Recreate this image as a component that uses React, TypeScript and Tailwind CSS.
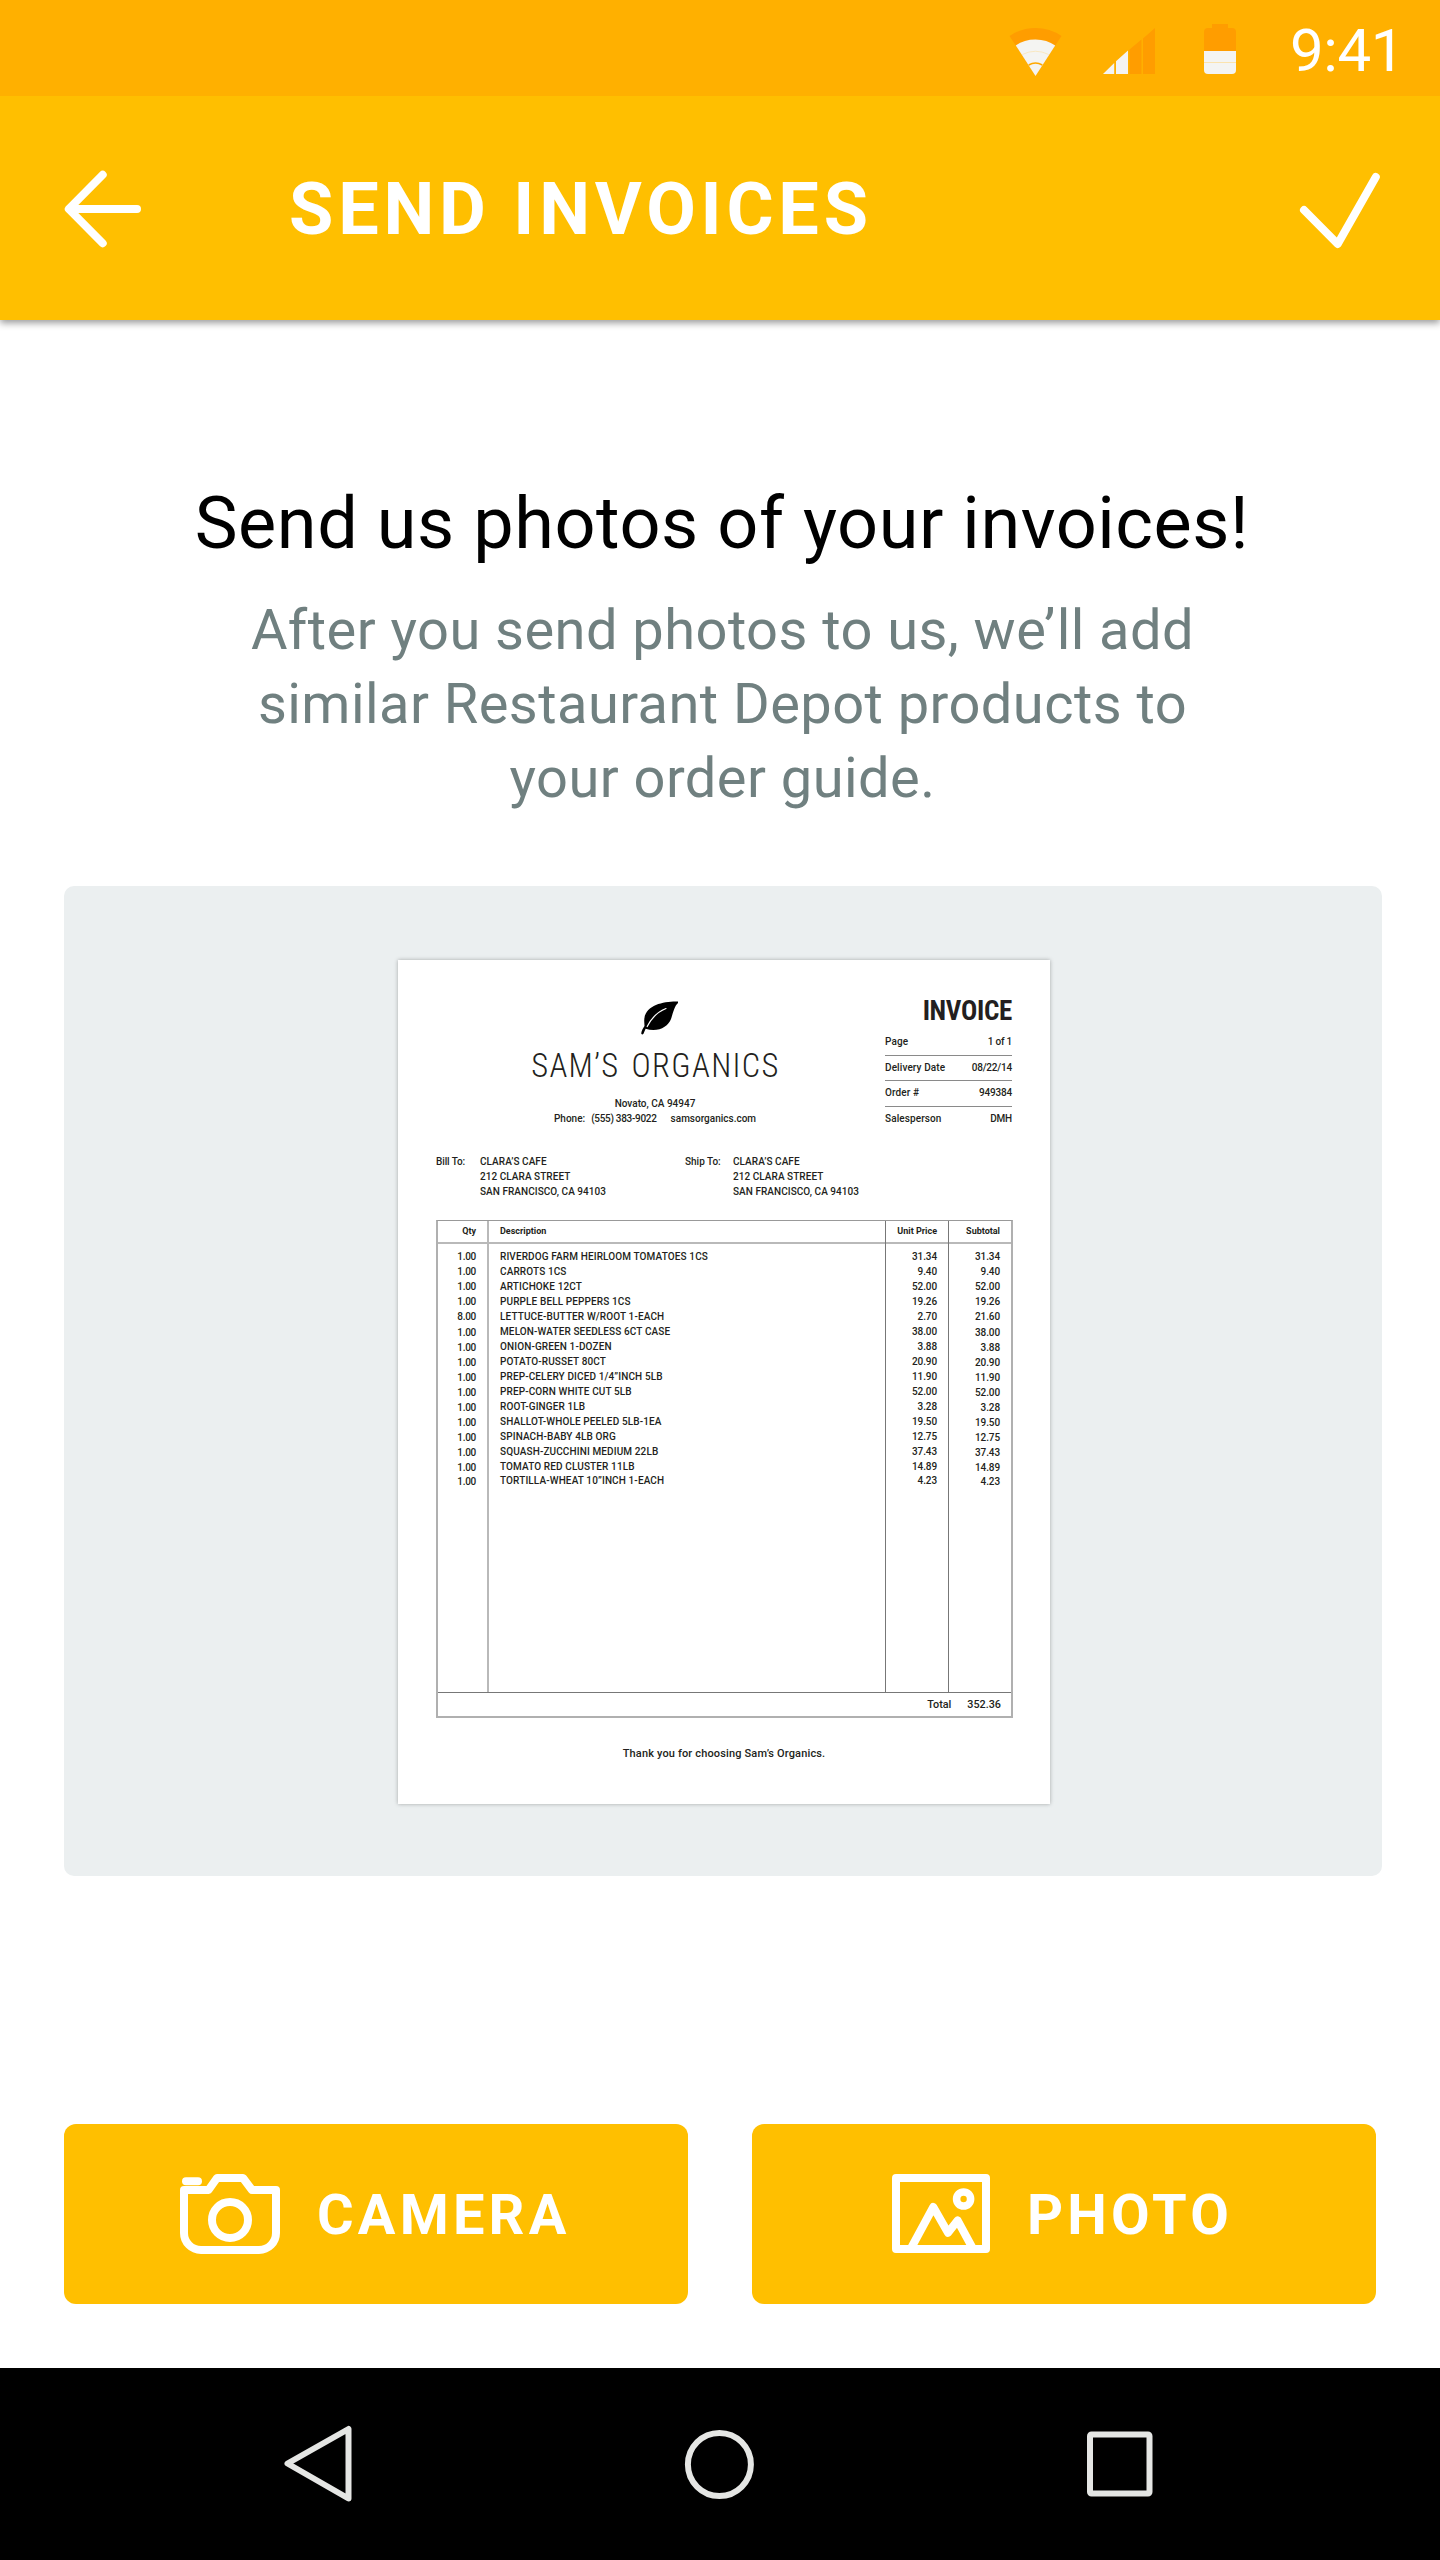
import type { ReactNode } from "react";

type Item = { qty: string; name: string; price: string; subtotal: string };

const items: Item[] = [
  { qty: "1.00", name: "RIVERDOG FARM HEIRLOOM TOMATOES 1CS", price: "31.34", subtotal: "31.34" },
  { qty: "1.00", name: "CARROTS 1CS", price: "9.40", subtotal: "9.40" },
  { qty: "1.00", name: "ARTICHOKE 12CT", price: "52.00", subtotal: "52.00" },
  { qty: "1.00", name: "PURPLE BELL PEPPERS 1CS", price: "19.26", subtotal: "19.26" },
  { qty: "8.00", name: "LETTUCE-BUTTER W/ROOT 1-EACH", price: "2.70", subtotal: "21.60" },
  { qty: "1.00", name: "MELON-WATER SEEDLESS 6CT CASE", price: "38.00", subtotal: "38.00" },
  { qty: "1.00", name: "ONION-GREEN 1-DOZEN", price: "3.88", subtotal: "3.88" },
  { qty: "1.00", name: "POTATO-RUSSET 80CT", price: "20.90", subtotal: "20.90" },
  { qty: "1.00", name: "PREP-CELERY DICED 1/4”INCH 5LB", price: "11.90", subtotal: "11.90" },
  { qty: "1.00", name: "PREP-CORN WHITE CUT 5LB", price: "52.00", subtotal: "52.00" },
  { qty: "1.00", name: "ROOT-GINGER 1LB", price: "3.28", subtotal: "3.28" },
  { qty: "1.00", name: "SHALLOT-WHOLE PEELED 5LB-1EA", price: "19.50", subtotal: "19.50" },
  { qty: "1.00", name: "SPINACH-BABY 4LB ORG", price: "12.75", subtotal: "12.75" },
  { qty: "1.00", name: "SQUASH-ZUCCHINI MEDIUM 22LB", price: "37.43", subtotal: "37.43" },
  { qty: "1.00", name: "TOMATO RED CLUSTER 11LB", price: "14.89", subtotal: "14.89" },
  { qty: "1.00", name: "TORTILLA-WHEAT 10”INCH 1-EACH", price: "4.23", subtotal: "4.23" },
];

const details = [
  ["Page", "1 of 1"],
  ["Delivery Date", "08/22/14"],
  ["Order #", "949384"],
  ["Salesperson", "DMH"],
];

function StatusBar() {
  return (
    <div className="relative z-10 flex h-24 items-start bg-[#ffb000] pl-[1009px]">
      <svg className="h-24 w-[53px] shrink-0" viewBox="0 0 53 96">
        <path d="M26.5 76 L0.5 36 Q12 28 26.5 28 T52.5 36 Z" fill="#ff9d00" />
        <path d="M26.5 76 L6.8 45.5 Q15 39.5 26.5 39.5 T46.2 45.5 Z" fill="#f4f4f2" />
        <path d="M13.3 54.5 Q26.5 48 39.7 54.5" fill="none" stroke="#fbe3ae" strokeWidth="0.7" />
        <path d="M19.7 65 Q26.5 61.2 33.3 65" fill="none" stroke="#ffa800" strokeWidth="1.5" />
      </svg>
      <svg className="ml-[41px] h-24 w-[52px] shrink-0" viewBox="0 0 52 96">
        <path d="M0 74 L11.2 63 V74 Z M13 61.3 L25 50.5 V74 H13 Z" fill="#f4f4f2" />
        <path d="M26.5 49.5 L38.5 39.5 V74 H26.5 Z M40 38.5 L52 28 V74 H40 Z" fill="#ff9d00" />
      </svg>
      <svg className="ml-[49px] h-24 w-8 shrink-0" viewBox="0 0 32 96">
        <path d="M8 24 H24 V28 H28 Q32 28 32 32 V51 H0 V32 Q0 28 4 28 H8 Z" fill="#ff9d00" />
        <path d="M0 51 H32 V70 Q32 74 28 74 H4 Q0 74 0 70 Z" fill="#f4f4f2" />
        <rect y="62" width="32" height="1" fill="#fbe3ae" />
      </svg>
      <div className="ml-[54px] pt-4 text-[60px] leading-[70px] tracking-[-0.4px] text-white">9:41</div>
    </div>
  );
}

function AppBar() {
  return (
    <header className="relative flex h-56 items-start bg-[#ffbf00] pl-16 text-white shadow-[0_3px_7px_rgba(0,0,0,0.4)]">
      <svg className="mt-[73px] h-20 w-20 shrink-0" viewBox="0 0 80 80" fill="none" stroke="currentColor" strokeWidth="8" strokeLinecap="round" strokeLinejoin="round">
        <path d="M38.7 5.8 L4.8 40 L38.7 74.2 M5 40 H73" />
      </svg>
      <h1 className="ml-[145px] mt-[77px] text-[72px] font-bold leading-[73px] tracking-[4.8px]">SEND INVOICES</h1>
      <svg className="ml-auto mr-[58px] mt-[76px] h-20 w-[84px] shrink-0" viewBox="0 0 84 80" fill="none" stroke="currentColor" strokeWidth="8" strokeLinecap="round" strokeLinejoin="round">
        <path d="M6 38 L39.7 72 L77.8 5" />
      </svg>
    </header>
  );
}

function Column({ title, values, className, nudge }: { title: string; values: string[]; className: string; nudge?: boolean }) {
  return (
    <div className={className}>
      <div className="h-[23px] whitespace-nowrap border-b-2 border-[#b9b9b9] px-[11px] text-[9px] font-bold leading-[21px] tracking-normal">{title}</div>
      <div className="px-[11px] pt-[6px]">
        {values.map((v, i) => (
          <div key={i} className={nudge && i === 5 ? "mt-px" : ""}>
            {v}
          </div>
        ))}
      </div>
    </div>
  );
}

function Address() {
  return (
    <div className="tracking-[0.05px]">
      CLARA’S CAFE
      <br />
      212 CLARA STREET
      <br />
      SAN FRANCISCO, CA 94103
    </div>
  );
}

function Invoice() {
  return (
    <article className="h-[844px] w-[652px] bg-white pl-[38px] pt-[35px] text-[10px] font-medium leading-[15px] text-[#231f20] shadow-[0_0_4px_rgba(0,0,0,0.3)]">
      <div className="flex w-[576px]">
        <div className="w-[438px] pt-[5px] text-center">
          <svg className="ml-[204px] h-9 w-10" viewBox="0 0 40 36">
            <path d="M38 1.5 C24 1 4 5 4.2 21 L4.5 26 C3 28 1.5 31 1.2 33.5 C2 35 3.5 34.5 3.8 33 L5.6 28.8 C18 32.5 28 27 31 19 C33.5 11.5 34.5 6 38 3 Z" fill="#000" />
            <path d="M7.2 26.5 C11 19 17 12 26 8.5" fill="none" stroke="#fff" strokeWidth="1.2" strokeLinecap="round" />
          </svg>
          <div className="mt-[11px] pl-[1px] text-[32.5px] font-light leading-[38px] tracking-[1.35px] [font-stretch:75%] [word-spacing:3.5px]">SAM’S ORGANICS</div>
          <div className="mt-[11px]">Novato, CA 94947</div>
          <div className="flex justify-center">
            <span className="mr-[6px]">Phone:</span>
            <span className="mr-[14px] tracking-[-0.3px]">(555) 383-9022</span>
            <span>samsorganics.com</span>
          </div>
        </div>
        <div className="ml-[11px] w-[127px]">
          <div className="text-right text-[27px] font-bold leading-8 tracking-[-0.3px] [font-stretch:75%]">INVOICE</div>
          <div className="mt-[3px]">
            {details.map(([label, value]) => (
              <div key={label} className="flex h-[25.6px] items-center justify-between border-b border-[#8a8a8a] pb-[1.4px] last:border-transparent">
                <span className="tracking-[0.1px]">{label}</span>
                <span className="tracking-[-0.2px]">{value}</span>
              </div>
            ))}
          </div>
        </div>
      </div>

      <div className="mt-[22px] grid grid-cols-[44px_205px_48px_auto]">
        <div className="tracking-[-0.1px]">Bill To:</div>
        <Address />
        <div>Ship To:</div>
        <Address />
      </div>

      <div className="mt-[21px] w-[577px] border-2 border-t border-[#b0b0b0] border-t-[#999]">
        <div className="flex h-[471px] leading-[14.93px]">
          <Column title="Qty" values={items.map((i) => i.qty)} className="w-[51px] border-r-2 border-[#b9b9b9] text-right tracking-[-0.3px]" nudge />
          <Column title="Description" values={items.map((i) => i.name)} className="w-[397px] border-r border-[#777] tracking-[0.12px]" />
          <Column title="Unit Price" values={items.map((i) => i.price)} className="w-[63px] border-r border-[#777] text-right tracking-[-0.1px]" />
          <Column title="Subtotal" values={items.map((i) => i.subtotal)} className="w-[62px] text-right tracking-[-0.1px]" nudge />
        </div>
        <div className="flex h-6 justify-end gap-4 border-t border-[#777] pr-[10px] text-[10.8px] leading-[23px]">
          <span>Total</span>
          <span>352.36</span>
        </div>
      </div>

      <div className="mt-[28px] pr-[38px] text-center text-[11px] tracking-[0.15px]">Thank you for choosing Sam’s Organics.</div>
    </article>
  );
}

function ActionButton({ icon, label, className }: { icon: ReactNode; label: string; className: string }) {
  return (
    <button className={`flex h-[180px] w-[624px] items-center rounded-xl bg-[#ffbf00] text-white ${className}`}>
      {icon}
      <span className="mt-[2px] text-[56px] font-bold leading-[66px] tracking-[4.2px]">{label}</span>
    </button>
  );
}

function CameraIcon() {
  return (
    <svg className="mr-[37px] h-20 w-[100px] shrink-0" viewBox="0 0 100 80" fill="none" stroke="currentColor" strokeWidth="8" strokeLinejoin="round">
      <path d="M4 16 H28.5 L37 4 H63 L72 16 H96 V59 A17 17 0 0 1 79 76 H21 A17 17 0 0 1 4 59 Z" />
      <circle cx="50" cy="46" r="18" />
      <rect x="2" y="3.3" width="20" height="8" rx="4" fill="currentColor" stroke="none" />
    </svg>
  );
}

function PhotoIcon() {
  return (
    <svg className="mr-[37px] h-20 w-[98px] shrink-0" viewBox="0 0 98 80" fill="none" stroke="currentColor" strokeWidth="8" strokeLinejoin="round">
      <rect x="4" y="4" width="90" height="71" />
      <path d="M19.7 73 L41.3 33 L56 58.7 L65.6 46.5 L80 73" />
      <circle cx="71.6" cy="25" r="7" strokeWidth="7.6" />
    </svg>
  );
}

function NavBar() {
  return (
    <nav className="flex h-48 items-center bg-black pl-[284px] text-[#e5e6e4]">
      <svg className="h-[78px] w-[69px]" viewBox="0 0 69 78" fill="none" stroke="currentColor" strokeWidth="6" strokeLinejoin="round">
        <path d="M64.5 4 V73.5 L3.5 38.5 Z" />
      </svg>
      <svg className="ml-[331px] h-[70px] w-[70px]" viewBox="0 0 70 70" fill="none" stroke="currentColor" strokeWidth="6">
        <circle cx="35.4" cy="35.5" r="31.5" />
      </svg>
      <svg className="ml-[333px] h-[66px] w-[66px]" viewBox="0 0 66 66" fill="none" stroke="currentColor" strokeWidth="6">
        <rect x="3" y="3.5" width="59.5" height="59" rx="1.5" />
      </svg>
    </nav>
  );
}

export default function App() {
  return (
    <div className="flex h-[2560px] w-[1440px] flex-col bg-white font-['Roboto',sans-serif]">
      <StatusBar />
      <AppBar />
      <main className="flex flex-1 flex-col">
        <h2 className="mt-[161px] pl-[4px] text-center text-[72px] leading-[85px] tracking-[0.57px] text-black">Send us photos of your invoices!</h2>
        <p className="mt-[27px] pl-[5px] text-center text-[56px] leading-[74px] tracking-[0.45px] text-[#708080]">
          After you send photos to us, we’ll add
          <br />
          similar Restaurant Depot products to
          <br />
          your order guide.
        </p>
        <section className="ml-16 mt-[71px] h-[990px] w-[1318px] rounded-[10px] bg-[#ebeff0] pl-[334px] pt-[74px]">
          <Invoice />
        </section>
        <div className="mt-[248px] flex gap-16 pl-16">
          <ActionButton icon={<CameraIcon />} label="CAMERA" className="pl-[116px]" />
          <ActionButton icon={<PhotoIcon />} label="PHOTO" className="pl-[140px]" />
        </div>
      </main>
      <NavBar />
    </div>
  );
}
